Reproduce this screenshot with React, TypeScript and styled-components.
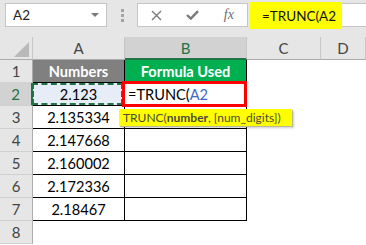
import styled, { createGlobalStyle, css } from "styled-components";

const GlobalStyle = createGlobalStyle`
  body {
    margin: 0;
    background: #ffffff;
    font-family: Lato, "Noto Sans", sans-serif;
  }
`;

const Page = styled.div`
  width: 366px;
  height: 245px;
  overflow: hidden;
  background: #ffffff;
`;

const Toolbar = styled.div`
  display: flex;
  align-items: flex-start;
  height: 37px;
  padding: 3px 0 0 5px;
  box-sizing: border-box;
  background: #e6e6e6;
`;

const NameBox = styled.div`
  width: 102px;
  height: 24px;
  box-sizing: border-box;
  background: #fff;
  border: 1px solid #c6c6c6;
  display: flex;
  align-items: center;
  justify-content: space-between;
  padding: 0 7px 0 7px;
  font-size: 13.5px;
  color: #222;
`;

const DropArrow = styled.span`
  width: 0;
  height: 0;
  border-left: 4px solid transparent;
  border-right: 4px solid transparent;
  border-top: 4px solid #7a7a7a;
`;

const Grip = styled.div`
  width: 30px;
  height: 24px;
  display: flex;
  flex-direction: column;
  align-items: center;
  justify-content: center;
  gap: 2px;
`;

const GripDot = styled.span`
  width: 3px;
  height: 3px;
  background: #a3a3a3;
`;

const FxButtons = styled.div`
  width: 111px;
  height: 24px;
  box-sizing: border-box;
  background: #fff;
  border: 1px solid #c6c6c6;
  display: flex;
  margin-right: 2px;
`;

const FxButton = styled.span`
  width: 37px;
  display: flex;
  align-items: center;
  justify-content: center;
  color: #7a7a7a;
`;

const FxLabel = styled.span`
  font-family: "Liberation Serif", "DejaVu Serif", serif;
  font-style: italic;
  font-size: 14px;
  color: #6e6e6e;
`;

const FormulaField = styled.div`
  flex: 1;
  height: 24px;
  box-sizing: border-box;
  background: #fff;
  border: 1px solid #c6c6c6;
  border-right: none;
  display: flex;
`;

const Highlight = styled.span`
  width: 92px;
  margin: -2px 0 -3px -1px;
  padding-left: 12px;
  box-sizing: border-box;
  background: #ffff00;
  display: flex;
  align-items: center;
  font-size: 13.5px;
  color: #111;
`;

const Sheet = styled.div`
  display: grid;
  grid-template-columns: 33px 92px 122px 74px 1fr;
  grid-auto-rows: 23px;
`;

const Corner = styled.div`
  position: relative;
  background: #e6e6e6;
  border-right: 1px solid #c6c6c6;
  border-bottom: 1px solid #ababab;
  box-sizing: border-box;
  &::after {
    content: "";
    position: absolute;
    right: 3px;
    bottom: 2px;
    width: 15px;
    height: 15px;
    background: #b9b9b9;
    clip-path: polygon(100% 0, 100% 100%, 0 100%);
  }
`;

const ColHeader = styled.div<{ $selected?: boolean }>`
  display: flex;
  align-items: center;
  justify-content: center;
  box-sizing: border-box;
  font-size: 15px;
  background: #e6e6e6;
  color: #444;
  border-right: 1px solid #c6c6c6;
  border-bottom: 1px solid #ababab;
  ${(p) =>
    p.$selected &&
    css`
      background: #d2d2d2;
      color: #217346;
      border-bottom: 2px solid #217346;
    `}
`;

const RowHeader = styled.div<{ $selected?: boolean }>`
  display: flex;
  align-items: center;
  justify-content: center;
  box-sizing: border-box;
  font-size: 15px;
  background: #e6e6e6;
  color: #444;
  border-right: 1px solid #ababab;
  border-bottom: 1px solid #d0d0d0;
  ${(p) =>
    p.$selected &&
    css`
      background: #d2d2d2;
      color: #217346;
      border-right: 2px solid #217346;
    `}
`;

const Cell = styled.div<{ $boxed?: boolean; $fill?: string; $head?: boolean; $center?: boolean }>`
  position: relative;
  display: flex;
  align-items: center;
  justify-content: ${(p) => (p.$center ? "center" : "flex-start")};
  box-sizing: border-box;
  padding: 0 3px;
  font-size: 14.6px;
  color: #000;
  white-space: nowrap;
  background: ${(p) => p.$fill ?? "#fff"};
  ${(p) =>
    p.$boxed &&
    css`
      border-right: 1px solid #000;
      border-bottom: 1px solid #000;
    `}
  ${(p) =>
    p.$head &&
    css`
      color: #fff;
      font-weight: 700;
    `}
`;

const CopiedCell = styled(Cell)`
  &::after {
    content: "";
    position: absolute;
    inset: 0 1px 0 -1px;
    border: 2px dashed #217346;
  }
`;

const EditCell = styled(Cell)`
  overflow: visible;
  &::after {
    content: "";
    position: absolute;
    left: -3px;
    right: -1px;
    top: -2px;
    bottom: -2px;
    border: 3px solid #ff0000;
    z-index: 2;
  }
`;

const RefText = styled.span`
  color: #3b6bc4;
`;

const Tooltip = styled.div`
  position: absolute;
  left: -6px;
  top: 26px;
  width: 173px;
  height: 17px;
  box-sizing: border-box;
  padding-left: 4px;
  background: #ffff00;
  box-shadow: 1px 1px 0 #b9b99a, 2px 2px 2px rgba(0, 0, 0, 0.2);
  font-size: 12px;
  font-weight: 400;
  line-height: 17px;
  color: #4a4a3a;
  z-index: 3;
  white-space: nowrap;
`;

const values = ["2.135334", "2.147668", "2.160002", "2.172336", "2.18467"];
const columns = ["A", "B", "C", "D"];

function CrossIcon() {
  return (
    <svg width="11" height="11" viewBox="0 0 11 11">
      <path d="M1 1 L10 10 M10 1 L1 10" stroke="currentColor" strokeWidth="1.4" fill="none" />
    </svg>
  );
}

function CheckIcon() {
  return (
    <svg width="13" height="10" viewBox="0 0 13 10">
      <path d="M1 5 L4.8 8.6 L12 1.2" stroke="currentColor" strokeWidth="2.4" fill="none" />
    </svg>
  );
}

function Blank() {
  return (
    <>
      <Cell />
      <Cell />
    </>
  );
}

export default function App() {
  return (
    <Page>
      <GlobalStyle />
      <Toolbar>
        <NameBox>
          A2
          <DropArrow />
        </NameBox>
        <Grip>
          <GripDot />
          <GripDot />
          <GripDot />
        </Grip>
        <FxButtons>
          <FxButton>
            <CrossIcon />
          </FxButton>
          <FxButton>
            <CheckIcon />
          </FxButton>
          <FxButton>
            <FxLabel>fx</FxLabel>
          </FxButton>
        </FxButtons>
        <FormulaField>
          <Highlight>=TRUNC(A2</Highlight>
        </FormulaField>
      </Toolbar>

      <Sheet>
        <Corner />
        {columns.map((c) => (
          <ColHeader key={c} $selected={c === "B"}>
            {c}
          </ColHeader>
        ))}

        <RowHeader>1</RowHeader>
        <Cell $boxed $head $center $fill="#808080">
          Numbers
        </Cell>
        <Cell $boxed $head $center $fill="#00b050">
          Formula Used
        </Cell>
        <Blank />

        <RowHeader $selected>2</RowHeader>
        <CopiedCell $boxed $center $fill="#e6edf7">
          2.123
        </CopiedCell>
        <EditCell $boxed>
          =TRUNC(<RefText>A2</RefText>
          <Tooltip>
            TRUNC(<b>number</b>, [num_digits])
          </Tooltip>
        </EditCell>
        <Blank />

        {values.map((v, i) => (
          <Row key={v} n={i + 3} value={v} />
        ))}

        <RowHeader>8</RowHeader>
        <Cell />
        <Cell />
        <Blank />
      </Sheet>
    </Page>
  );
}

function Row({ n, value }: { n: number; value: string }) {
  return (
    <>
      <RowHeader>{n}</RowHeader>
      <Cell $boxed $center>
        {value}
      </Cell>
      <Cell $boxed />
      <Blank />
    </>
  );
}
